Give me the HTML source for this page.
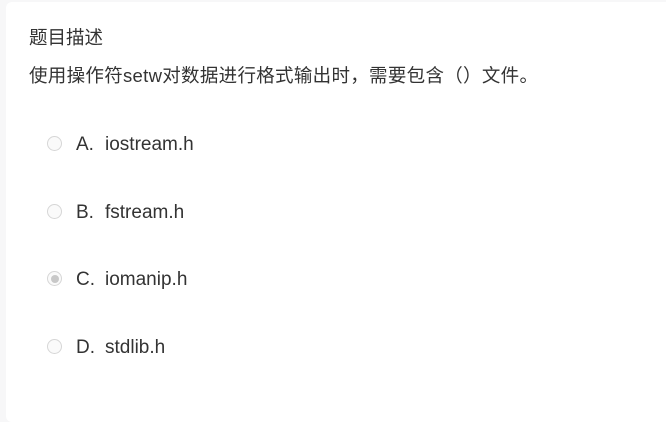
<!DOCTYPE html>
<html><head><meta charset="utf-8"><style>
html,body{margin:0;padding:0;width:666px;height:407px;background:#f7f7f8;overflow:hidden}
.card{position:absolute;left:6px;top:2px;width:670px;height:420px;background:#fff;border-radius:6px}
body{font-family:"Liberation Sans","Noto Sans CJK SC",sans-serif;color:#333}
.t{position:absolute;left:29px;top:27px;font-size:18.5px;line-height:22px;color:#333}
.q{position:absolute;left:29px;top:65px;font-size:18.5px;line-height:22px;color:#333;letter-spacing:0.3px}
.o{position:absolute;left:47px;font-size:19px;line-height:22px;color:#333;display:flex;align-items:center}
.r{width:15px;height:15px;border:1px solid #d6d6d6;border-radius:50%;box-sizing:border-box;margin-right:14px;background:#fafafa;position:relative;margin-top:-3px}
.r.s::after{content:"";position:absolute;left:2.5px;top:2.5px;width:8px;height:8px;border-radius:50%;background:#c8c8c8}
.o b{font-weight:normal;display:inline-block;width:29px}
</style></head><body>
<div class="card"></div>
<div class="t">题目描述</div>
<div class="q">使用操作符setw对数据进行格式输出时，需要包含（）文件。</div>
<div class="o" style="top:134px"><span class="r"></span><b>A.</b>iostream.h</div>
<div class="o" style="top:202px"><span class="r"></span><b>B.</b>fstream.h</div>
<div class="o" style="top:269px"><span class="r s"></span><b>C.</b>iomanip.h</div>
<div class="o" style="top:337px"><span class="r"></span><b>D.</b>stdlib.h</div>
</body></html>
